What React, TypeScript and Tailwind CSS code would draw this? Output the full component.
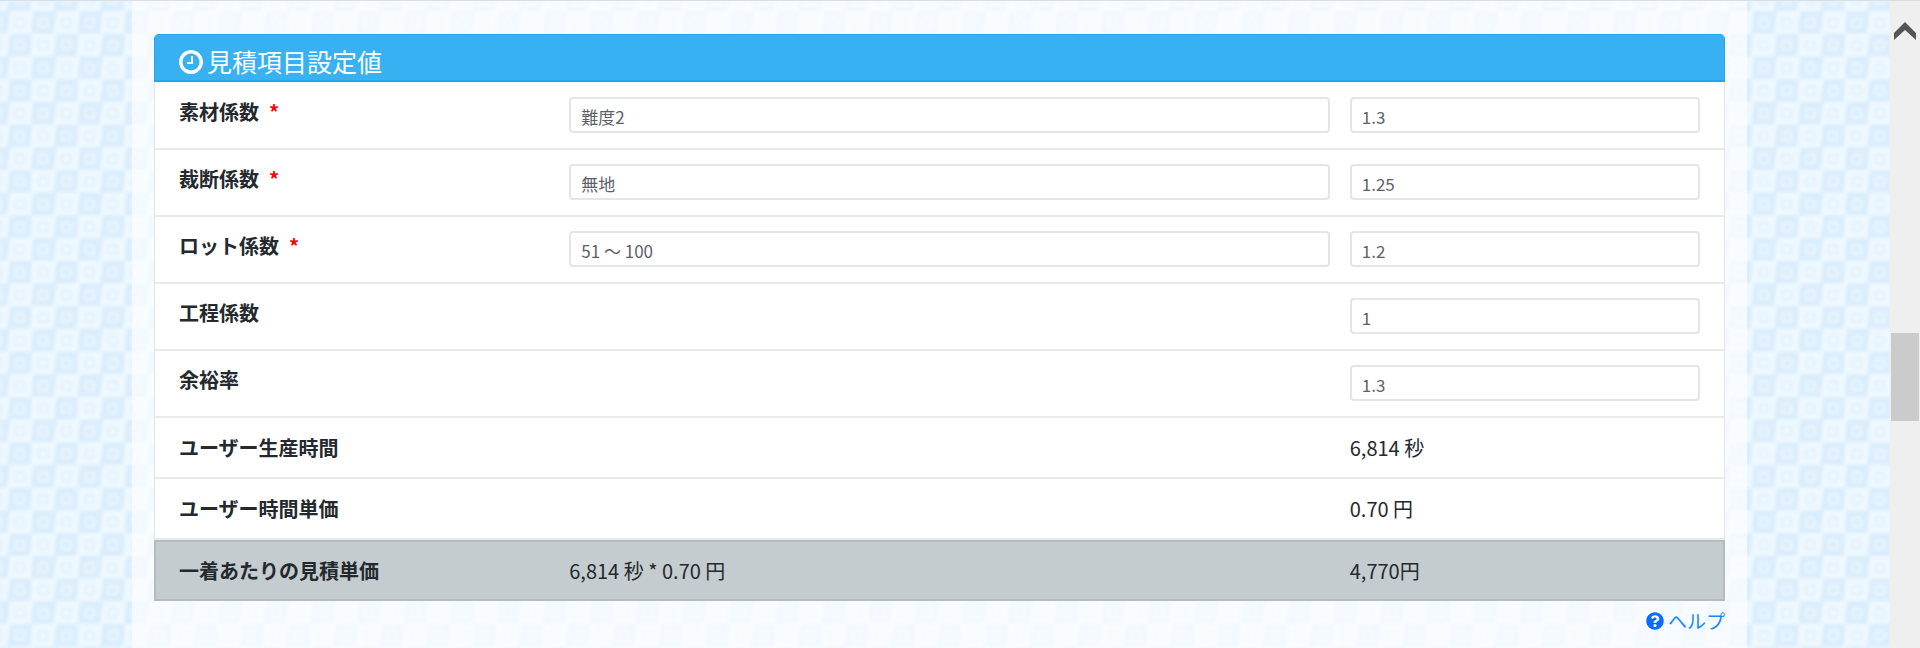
import { ReactNode } from "react";
import { FaQuestionCircle } from "react-icons/fa";

const ROW =
  "grid grid-cols-[37fr_76fr_35fr] gap-x-5 border-b-2 border-[#e9eaec] px-6";
const FIELD =
  "h-9 w-full rounded border-2 border-[#e3e6e9] bg-white px-2.5 pt-0.5 text-[17px] leading-6 text-[#5c6268] outline-none focus:border-[#80bdff]";

function ClockIcon() {
  return (
    <svg viewBox="0 128 1536 1536" className="size-6 fill-current" aria-hidden="true">
      <path d="M896 544v448q0 14-9 23t-23 9h-320q-14 0-23-9t-9-23v-64q0-14 9-23t23-9h224v-352q0-14 9-23t23-9h64q14 0 23 9t9 23zm416 352q0-148-73-273t-198-198-273-73-273 73-198 198-73 273 73 273 198 198 273 73 273-73 198-198 73-273zm224 0q0 209-103 385.500t-279.500 279.500-385.500 103-385.500-103-279.500-279.500-103-385.500 103-385.500 279.500-279.500 385.500-103 385.500 103 279.500 279.500 103 385.500z" />
    </svg>
  );
}

function Backdrop() {
  return (
    <svg className="absolute inset-0 size-full" aria-hidden="true">
      <defs>
        <filter id="soften" x="-5%" y="-5%" width="110%" height="110%">
          <feGaussianBlur stdDeviation="1.6" />
        </filter>
        <pattern id="checks" x="31.5" y="10" width="46.5" height="45.4" patternUnits="userSpaceOnUse">
          <rect width="46.5" height="45.4" fill="#eef8ff" />
          <g fill="#dbeefd">
            <path d="M2 0H25L22 22.700H-1Z" />
            <path d="M25 22.700H48L45 45.400H22Z" />
          </g>
          <g fill="none" strokeWidth="2.500">
            <rect x="7.500" y="7.500" width="8.500" height="8.500" rx="2" stroke="#e9f5fe" />
            <rect x="30.500" y="30" width="8.500" height="8.500" rx="2" stroke="#e9f5fe" />
            <rect x="30.500" y="7.500" width="8.500" height="8.500" rx="2" stroke="#e3f2fd" />
            <rect x="7.500" y="30" width="8.500" height="8.500" rx="2" stroke="#e3f2fd" />
          </g>
        </pattern>
      </defs>
      <rect width="100%" height="100%" fill="url(#checks)" filter="url(#soften)" />
    </svg>
  );
}

type FieldRowProps = {
  id: string;
  label: string;
  value: string;
  choice?: string;
  required?: boolean;
};

function FieldRow({ id, label, value, choice, required }: FieldRowProps) {
  return (
    <div className={`${ROW} pt-3.5 pb-[15px]`}>
      <label htmlFor={id} className="flex gap-2.5 text-xl leading-[30px] font-bold">
        {label}
        {required && <span className="text-[#ff0000]">*</span>}
      </label>
      <div>
        {choice && (
          <input className={FIELD} aria-label={`${label} 区分`} defaultValue={choice} />
        )}
      </div>
      <input id={id} className={FIELD} defaultValue={value} />
    </div>
  );
}

function TextRow({ label, children }: { label: string; children: ReactNode }) {
  return (
    <div className={`${ROW} pt-[15px] pb-3.5 text-xl leading-[30px]`}>
      <div className="font-bold">{label}</div>
      <div className="col-start-3">{children}</div>
    </div>
  );
}

export default function App() {
  return (
    <div className="relative flex min-h-screen bg-[#e6f3fe] font-['Noto_Sans_CJK_JP',sans-serif] text-[#24292e]">
      <div className="relative flex flex-1 border-t border-[#d8dfe4] pr-[143px] pl-[132px]">
        <Backdrop />
        <main className="relative flex-1 bg-white/65 px-[22px] pt-[33px]">
          <section className="rounded-t-[5px] bg-white">
            <h2 className="flex h-12 items-center gap-1 rounded-t-[5px] border border-b-2 border-[#22a7ee] bg-[#37b1f1] px-6 pt-2 text-[25px] leading-none text-white">
              <ClockIcon />
              見積項目設定値
            </h2>
            <form className="border-x border-[#e3e6e9] pt-px">
              <FieldRow id="material" label="素材係数" choice="難度2" value="1.3" required />
              <FieldRow id="cutting" label="裁断係数" choice="無地" value="1.25" required />
              <FieldRow id="lot" label="ロット係数" choice="51 ～ 100" value="1.2" required />
              <FieldRow id="process" label="工程係数" value="1" />
              <FieldRow id="margin" label="余裕率" value="1.3" />
              <TextRow label="ユーザー生産時間">6,814 秒</TextRow>
              <TextRow label="ユーザー時間単価">0.70 円</TextRow>
            </form>
            <div className="grid grid-cols-[37fr_76fr_35fr] gap-x-5 border-2 border-[#b4bcc0] bg-[#c5cccf] px-[23px] pt-3.5 pb-[13px] text-xl leading-[30px]">
              <div className="font-bold">一着あたりの見積単価</div>
              <div>6,814 秒 * 0.70 円</div>
              <div>4,770円</div>
            </div>
          </section>
          <div className="flex justify-end pt-1">
            <a href="#help" className="flex items-center gap-1 text-[19px] leading-8 text-[#1687ff]">
              <FaQuestionCircle className="size-[18px] text-[#0a6cff]" />
              ヘルプ
            </a>
          </div>
        </main>
      </div>
      <div className="relative flex w-[30px] shrink-0 flex-col items-center border-t border-[#dcdcdc] bg-[#efefef]">
        <button type="button" aria-label="上へ" className="flex h-[60px] w-full items-center justify-center">
          <svg viewBox="0 0 24 18" className="h-[18px] w-6" aria-hidden="true">
            <path d="M1 18V11L12 0L23 11V18L12 8Z" fill="#555" />
          </svg>
        </button>
        <div className="mt-[272px] h-[88px] w-7 bg-[#cbcbcb]" />
      </div>
    </div>
  );
}
